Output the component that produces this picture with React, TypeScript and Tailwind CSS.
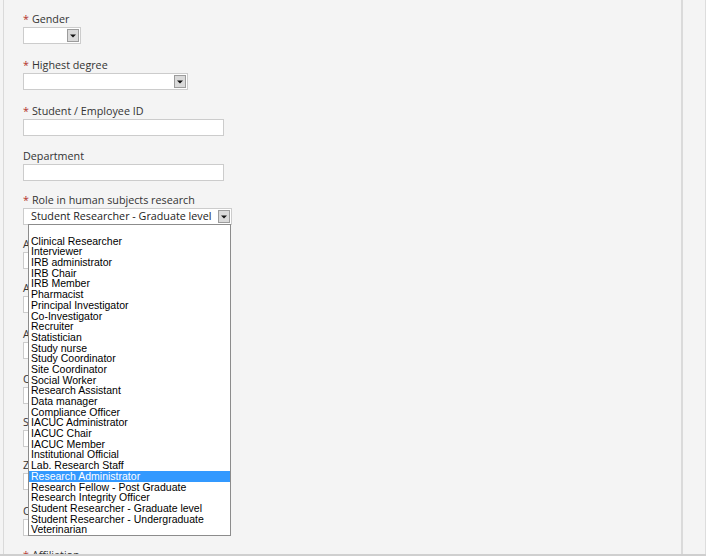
import React from "react";

const roles = [
  "",
  "Clinical Researcher",
  "Interviewer",
  "IRB administrator",
  "IRB Chair",
  "IRB Member",
  "Pharmacist",
  "Principal Investigator",
  "Co-Investigator",
  "Recruiter",
  "Statistician",
  "Study nurse",
  "Study Coordinator",
  "Site Coordinator",
  "Social Worker",
  "Research Assistant",
  "Data manager",
  "Compliance Officer",
  "IACUC Administrator",
  "IACUC Chair",
  "IACUC Member",
  "Institutional Official",
  "Lab. Research Staff",
  "Research Administrator",
  "Research Fellow - Post Graduate",
  "Research Integrity Officer",
  "Student Researcher - Graduate level",
  "Student Researcher - Undergraduate",
  "Veterinarian",
];

const selectedRole = "Research Administrator";

const Label = ({ required, children }: { required?: boolean; children: React.ReactNode }) => (
  <div className="h-[14px] leading-[14px] text-[10.75px] text-[#333333] whitespace-nowrap">
    {required && <span className="text-[#b3302a] mr-[3px]">*</span>}
    {children}
  </div>
);

const Arrow = () => (
  <span className="flex items-center justify-center w-[12px] h-[13px] mr-[1px] border border-[#9c9c9c] bg-[#dadada]">
    <svg width="6" height="4" viewBox="0 0 6 4">
      <path d="M0 0.5h6L3 3.5z" fill="#111" />
    </svg>
  </span>
);

const Select = ({ width, value }: { width: string; value?: string }) => (
  <div className={`${width} h-[17px] mt-[1px] flex items-center border border-[#cccccc] bg-white`}>
    <span className="flex-1 pl-[7px] text-[10.75px] leading-[15px] text-[#222] whitespace-nowrap overflow-hidden">
      {value}
    </span>
    <Arrow />
  </div>
);

const Input = () => <div className="w-[201px] h-[17px] mt-[1px] border border-[#cccccc] bg-white" />;

const hidden = [
  { label: "Address Line 1", mb: "mb-[12px]" },
  { label: "Address Line 2", mb: "mb-[14px]" },
  { label: "Address Line 3", mb: "mb-[13px]" },
  { label: "City", mb: "mb-[11px]" },
  { label: "State / Province", mb: "mb-[11px]" },
  { label: "Zip / Postal Code", mb: "mb-[14px]" },
  { label: "Country", mb: "mb-[12px]" },
];

export default function App() {
  return (
    <div className="w-[713px] h-[557px] bg-white overflow-hidden font-['Open_Sans',sans-serif]">
      <div className="flex w-[706px] h-[556px] bg-[#f4f4f4] border-b-2 border-[#cfcfcf] pl-[3px]">
        <div className="relative w-[680px] h-full border-l border-r-2 border-[#dadada] pl-[19px] pt-[12px] overflow-hidden">
          <div className="mb-[14px]">
            <Label required>Gender</Label>
            <Select width="w-[58px]" />
          </div>
          <div className="mb-[14px]">
            <Label required>Highest degree</Label>
            <Select width="w-[165px]" />
          </div>
          <div className="mb-[13px]">
            <Label required>Student / Employee ID</Label>
            <Input />
          </div>
          <div className="mb-[12px]">
            <Label>Department</Label>
            <Input />
          </div>
          <div className="relative mb-[12px]">
            <Label required>Role in human subjects research</Label>
            <Select width="w-[209px]" value="Student Researcher - Graduate level" />
            <ul className="absolute left-[5px] top-[31px] z-10 w-[203px] border border-[#8c8c8c] bg-white font-['Liberation_Sans',Arial,sans-serif] text-[10.5px] text-black">
              {roles.map((r, i) => (
                <li
                  key={i}
                  className={`h-[10.7px] leading-[10.7px] pl-[2px] whitespace-nowrap ${
                    r === selectedRole ? "bg-[#3399ff] text-white" : ""
                  }`}
                >
                  {r}
                </li>
              ))}
            </ul>
          </div>
          {hidden.map((f) => (
            <div key={f.label} className={f.mb}>
              <Label>{f.label}</Label>
              <Input />
            </div>
          ))}
          <div>
            <Label required>Affiliation</Label>
            <Input />
          </div>
        </div>
        <div className="flex-1 border-r border-[#dddddd]" />
      </div>
    </div>
  );
}
